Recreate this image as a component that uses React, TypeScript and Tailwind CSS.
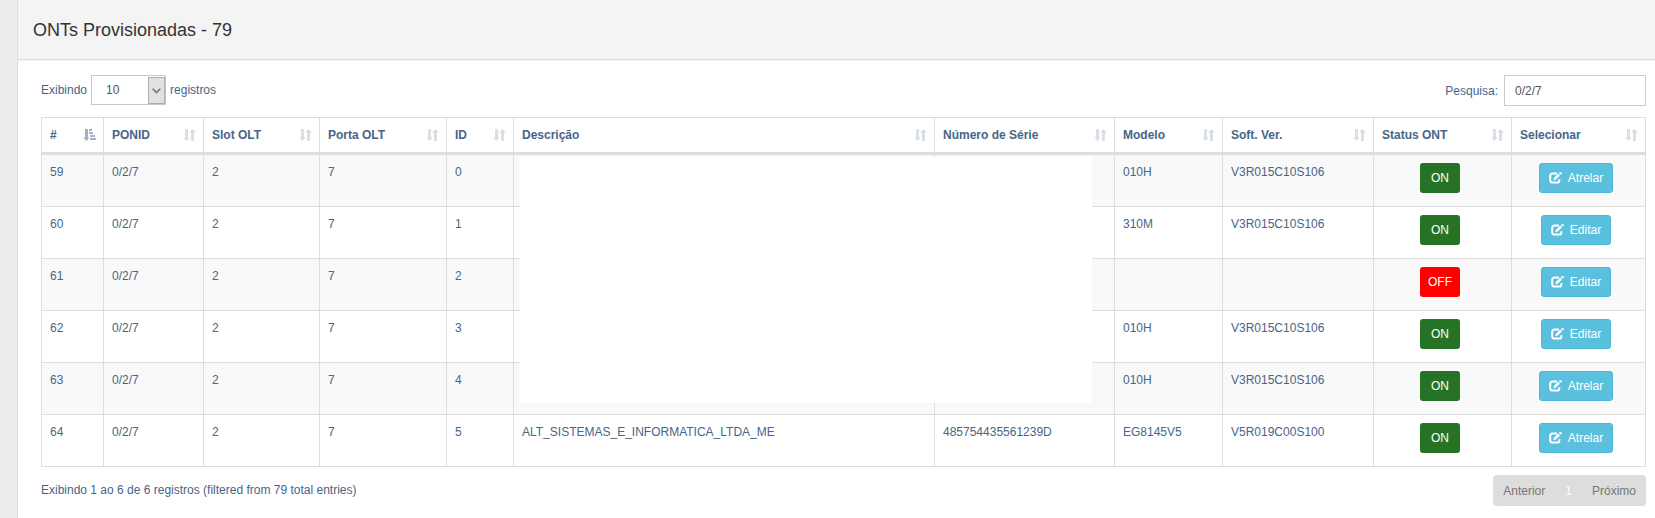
import React, { useState } from 'react';

const columns = [
  { label: '#', width: 'w-[62px]', sorted: true },
  { label: 'PONID', width: 'w-[100px]' },
  { label: 'Slot OLT', width: 'w-[116px]' },
  { label: 'Porta OLT', width: 'w-[127px]' },
  { label: 'ID', width: 'w-[67px]' },
  { label: 'Descrição', width: '' },
  { label: 'Número de Série', width: 'w-[180px]' },
  { label: 'Modelo', width: 'w-[108px]' },
  { label: 'Soft. Ver.', width: 'w-[151px]' },
  { label: 'Status ONT', width: 'w-[138px]' },
  { label: 'Selecionar', width: 'w-[134px]' },
];

const onts = [
  { n: 59, id: 0, descricao: '', serie: '', modelo: '010H', versao: 'V3R015C10S106', online: true, acao: 'Atrelar' },
  { n: 60, id: 1, descricao: '', serie: '', modelo: '310M', versao: 'V3R015C10S106', online: true, acao: 'Editar' },
  { n: 61, id: 2, descricao: '', serie: '', modelo: '', versao: '', online: false, acao: 'Editar' },
  { n: 62, id: 3, descricao: '', serie: '', modelo: '010H', versao: 'V3R015C10S106', online: true, acao: 'Editar' },
  { n: 63, id: 4, descricao: '', serie: '', modelo: '010H', versao: 'V3R015C10S106', online: true, acao: 'Atrelar' },
  {
    n: 64,
    id: 5,
    descricao: 'ALT_SISTEMAS_E_INFORMATICA_LTDA_ME',
    serie: '485754435561239D',
    modelo: 'EG8145V5',
    versao: 'V5R019C00S100',
    online: true,
    acao: 'Atrelar',
  },
];

const SortIcon = () => (
  <svg viewBox="0 0 13 12" className="h-3 w-[13px] shrink-0 opacity-20" fill="currentColor" aria-hidden="true">
    <path d="M2 0h3v8.5h1.8L3.5 12 .2 8.5H2z" />
    <path d="M8 12h3V3.5h2L9.5 0 6 3.5h2z" />
  </svg>
);

const SortAscIcon = () => (
  <svg viewBox="0 0 13 12" className="h-3 w-[13px] shrink-0 opacity-50" fill="currentColor" aria-hidden="true">
    <path d="M2 0h3v8.5h1.5L3.4 12 .2 8.5H2z" />
    <path d="M6 0h3v2H6zM6 3h4v2H6zM7 6h5v2H7zM7 9h6v2H7z" />
  </svg>
);

const EditIcon = () => (
  <svg viewBox="0 0 13 12" className="h-3 w-[13px] shrink-0" aria-hidden="true">
    <path
      d="M8 1.6H3.4A2.2 2.2 0 0 0 1.2 3.8v4.6a2.2 2.2 0 0 0 2.2 2.2h4.7a2.2 2.2 0 0 0 2.2-2.2V7.2"
      fill="none"
      stroke="currentColor"
      strokeWidth="2"
    />
    <path d="M4.3 8.3l.7-2.5 4.2-4.2 1.8 1.8-4.2 4.2zM9.8.9l.7-.7h2.3l-.2 1.8-.8.8z" fill="currentColor" />
  </svg>
);

const App = () => {
  const [search, setSearch] = useState('0/2/7');

  return (
    <div className="min-h-screen bg-[#ececec] pl-[17px] font-['Liberation_Sans',Arial,sans-serif] text-xs text-[#486588]">
      <div className="min-h-screen border-l border-[#dddddd] bg-white">
        <div className="border-b border-[#dddddd] bg-[#f4f4f4] px-[15px] pt-[17px] pb-[15px]">
          <h1 className="text-lg leading-[27px] text-[#333333]">ONTs Provisionadas - 79</h1>
        </div>

        <div className="border-t border-[#f4f4f4] pt-[14px] pr-[9px] pl-[23px]">
          <div className="flex items-start justify-between">
            <label className="flex items-center gap-1">
              Exibindo
              <span className="relative flex h-[30px] w-[75px]">
                <select
                  defaultValue="10"
                  className="h-full w-full appearance-none border border-[#c8c8c8] bg-white pl-[14px] text-xs text-[#555555]"
                >
                  <option>10</option>
                  <option>25</option>
                  <option>50</option>
                  <option>100</option>
                </select>
                <span className="pointer-events-none absolute top-[2px] right-px bottom-px flex w-[17px] items-center justify-center border border-[#adadad] bg-[#e1e1e1]">
                  <svg viewBox="0 0 9 6" className="h-[6px] w-[9px]" fill="none" stroke="#777777" strokeWidth="1.6">
                    <path d="M.7.8l3.8 3.8L8.3.8" />
                  </svg>
                </span>
              </span>
              registros
            </label>
            <label className="flex items-center gap-[6px]">
              Pesquisa:
              <input
                type="text"
                value={search}
                onChange={(e) => setSearch(e.target.value)}
                className="h-[31px] w-[142px] border border-[#cccccc] bg-white px-[10px] text-xs text-[#555555]"
              />
            </label>
          </div>

          <div className="relative mt-[11px]">
            <table className="w-full table-fixed border-separate border-spacing-0 border-t border-r border-[#dddddd]">
              <thead>
                <tr>
                  {columns.map((col) => (
                    <th
                      key={col.label}
                      className={`${col.width} h-[37px] border-b-[3px] border-l border-[#dddddd] pr-[7px] pl-2 text-left align-middle font-bold`}
                    >
                      <div className="flex items-center justify-between whitespace-nowrap">
                        {col.label}
                        {col.sorted ? <SortAscIcon /> : <SortIcon />}
                      </div>
                    </th>
                  ))}
                </tr>
              </thead>
              <tbody>
                {onts.map((ont) => (
                  <tr
                    key={ont.n}
                    className="odd:bg-[#f9f9f9] [&>td]:h-[52px] [&>td]:border-b [&>td]:border-l [&>td]:border-[#dddddd] [&>td]:px-2 [&>td]:pt-2 [&>td]:align-top [&>td]:leading-[18px]"
                  >
                    <td>{ont.n}</td>
                    <td>0/2/7</td>
                    <td>2</td>
                    <td>7</td>
                    <td>{ont.id}</td>
                    <td>{ont.descricao}</td>
                    <td>{ont.serie}</td>
                    <td>{ont.modelo}</td>
                    <td>{ont.versao}</td>
                    <td>
                      <div className="flex justify-center pr-[5px]">
                        <button
                          type="button"
                          className={`h-[30px] w-10 rounded-[3px] text-white ${ont.online ? 'bg-[#267326]' : 'bg-[#ff0000]'}`}
                        >
                          {ont.online ? 'ON' : 'OFF'}
                        </button>
                      </div>
                    </td>
                    <td>
                      <div className="flex justify-center pr-[5px]">
                        <button
                          type="button"
                          className="flex h-[30px] items-center gap-[6px] rounded-[3px] border border-[#46b8da] bg-[#5bc0de] px-[9px] text-white"
                        >
                          <EditIcon />
                          {ont.acao}
                        </button>
                      </div>
                    </td>
                  </tr>
                ))}
              </tbody>
            </table>
            <div className="absolute top-[40px] right-[554px] left-[479px] h-[246px] bg-white" />
          </div>

          <div className="flex items-start justify-between pt-2">
            <p className="pt-[6px] leading-[18px]">Exibindo 1 ao 6 de 6 registros (filtered from 79 total entries)</p>
            <nav className="flex h-[31px] items-center rounded bg-[#dddddd] text-[#777777]">
              <a href="#anterior" className="px-[10px]">
                Anterior
              </a>
              <a href="#1" className="px-[10px] text-white">
                1
              </a>
              <a href="#proximo" className="px-[10px]">
                Próximo
              </a>
            </nav>
          </div>
        </div>
      </div>
    </div>
  );
};

export default App;
